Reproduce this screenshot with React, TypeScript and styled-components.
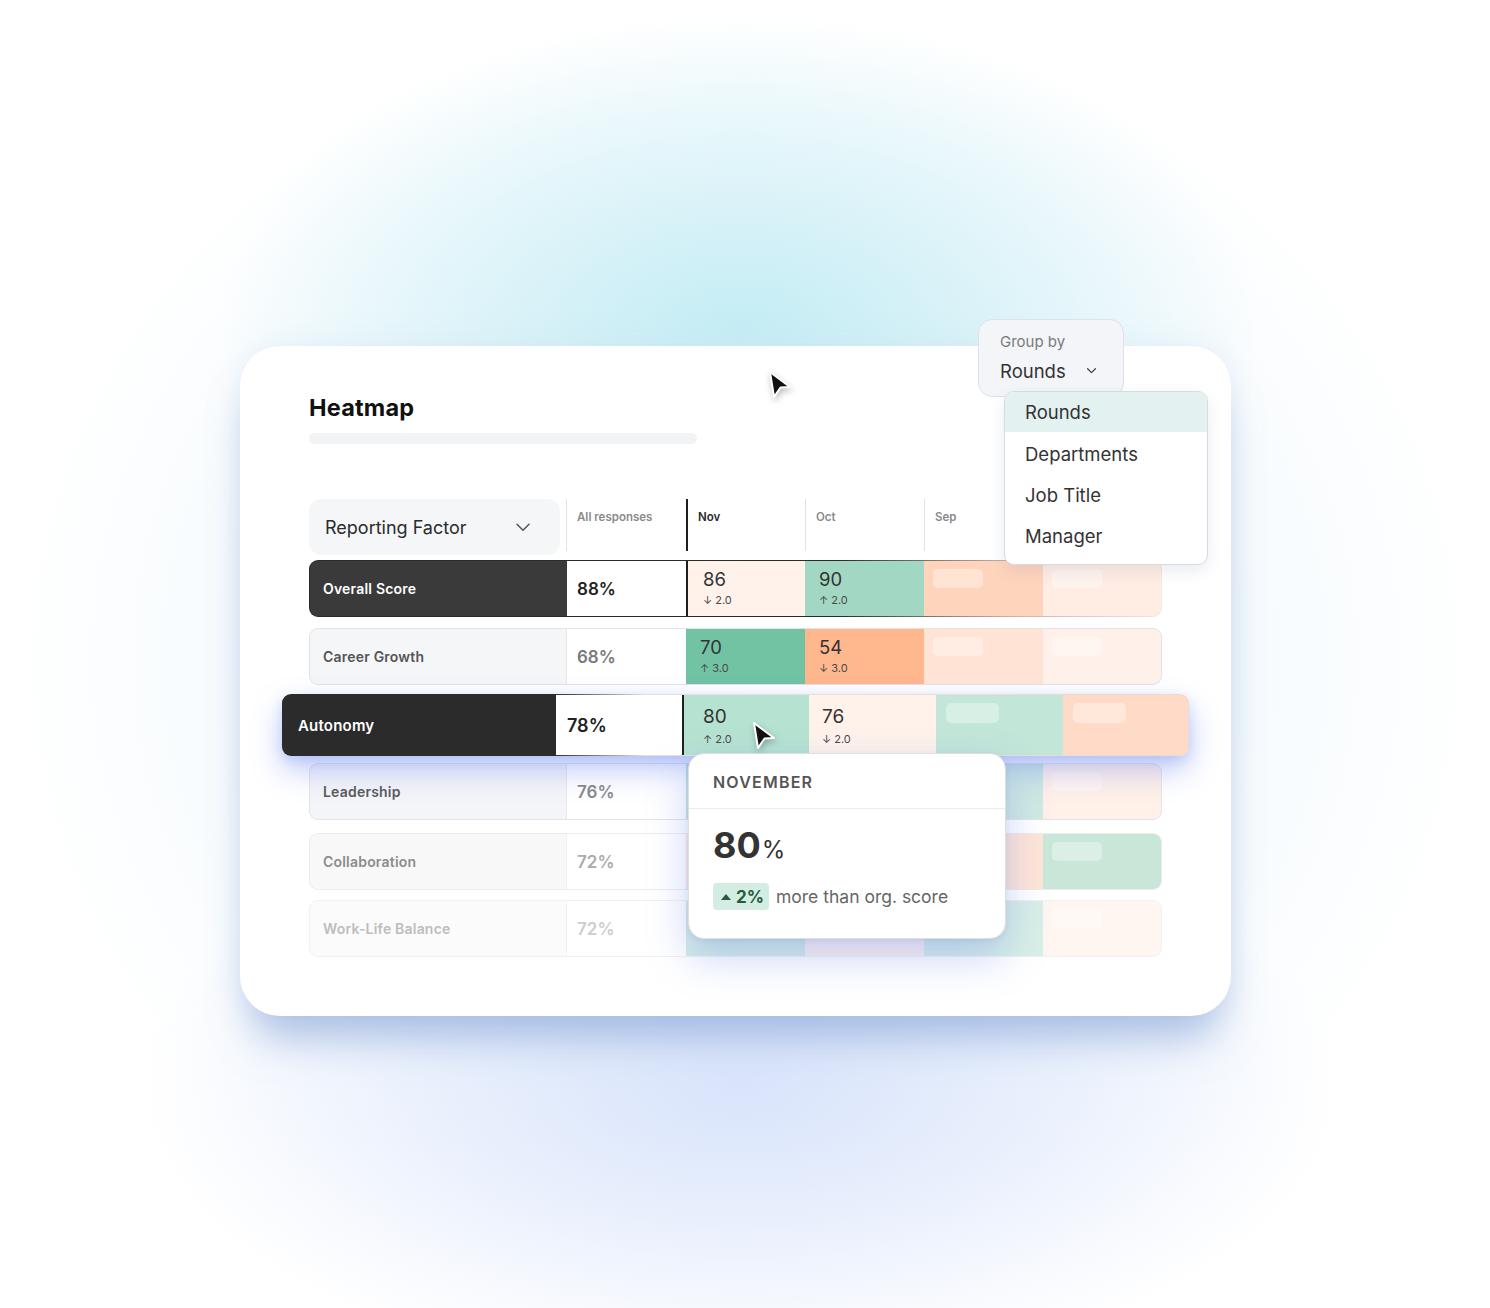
import React from "react";
import styled, { createGlobalStyle, css } from "styled-components";

const Global = createGlobalStyle`
  html, body { margin: 0; padding: 0; background: #fff; }
  body { font-family: Inter, "Noto Sans", Arial, sans-serif; -webkit-font-smoothing: antialiased; }
  * { box-sizing: border-box; }
`;

const Page = styled.div`
  position: relative;
  width: 1490px;
  height: 1308px;
  overflow: hidden;
  padding: 346px 0 0 240px;
  background:
    radial-gradient(ellipse 520px 310px at 740px 330px, rgba(194, 236, 244, 0.95), rgba(194, 236, 244, 0) 100%),
    radial-gradient(ellipse 600px 290px at 740px 1090px, rgba(216, 227, 251, 0.95), rgba(216, 227, 251, 0) 100%),
    radial-gradient(ellipse 740px 660px at 745px 660px, rgba(226, 241, 250, 0.9), rgba(255, 255, 255, 0) 100%),
    #ffffff;
`;

const Card = styled.div`
  position: relative;
  width: 991px;
  height: 670px;
  padding: 47px 69px 0 69px;
  background: #fff;
  border-radius: 40px;
  box-shadow: 0 34px 40px -12px rgba(120, 152, 210, 0.55), 0 0 30px rgba(200, 220, 240, 0.35);
`;

const Title = styled.h1`
  margin: 0;
  font-size: 23.5px;
  line-height: 30px;
  font-weight: 700;
  color: #111;
  letter-spacing: 0.2px;
`;

const Skeleton = styled.div`
  width: 388px;
  height: 11px;
  margin-top: 10px;
  border-radius: 6px;
  background: #f2f3f5;
`;

const Table = styled.div`
  position: relative;
  margin-top: 55px;
  width: 853px;
  display: flex;
  flex-direction: column;
`;

const HeaderRow = styled.div`
  display: grid;
  grid-template-columns: 257px 120px 119px 119px 119px 119px;
  height: 56px;
  margin-bottom: 5px;
`;

const FactorSelect = styled.div`
  width: 251px;
  height: 56px;
  border-radius: 12px;
  background: #f5f6f8;
  display: flex;
  align-items: center;
  justify-content: space-between;
  padding: 0 30px 0 16px;
  font-size: 18px;
  color: #2b2b2b;
`;

const HeadCell = styled.div<{ $active?: boolean }>`
  height: 52px;
  padding: 11px 0 0 10px;
  font-size: 11.5px;
  font-weight: 600;
  color: ${(p) => (p.$active ? "#2a2a2a" : "#8a8a8a")};
  border-left: ${(p) => (p.$active ? "2px solid #1f1f1f" : "1px solid #e2e2e2")};
`;

const RowFrame = styled.div<{ $frame: string; $wide?: boolean; $shadow?: boolean; $top: number }>`
  padding: 1px;
  border-radius: 9px;
  margin-top: ${(p) => p.$top}px;
  background: ${(p) => p.$frame};
  ${(p) =>
    p.$wide &&
    css`
      margin-left: -27px;
      margin-right: -27px;
      position: relative;
      z-index: 2;
    `}
  ${(p) =>
    p.$shadow &&
    css`
      box-shadow: 0 14px 30px rgba(96, 126, 240, 0.4), 0 4px 12px rgba(96, 126, 240, 0.2);
    `}
`;

const RowGrid = styled.div<{ $wide?: boolean }>`
  display: grid;
  grid-template-columns: ${(p) =>
    p.$wide ? "272px 127px 127px 127px 127px 125px" : "256px 120px 119px 119px 119px 118px"};
  height: ${(p) => (p.$wide ? "60px" : "55px")};
  border-radius: 8px;
  overflow: hidden;
`;

const LabelCell = styled.div<{ $bg: string; $color: string; $wide?: boolean }>`
  display: flex;
  align-items: center;
  padding-left: ${(p) => (p.$wide ? "15px" : "13px")};
  background: ${(p) => p.$bg};
  color: ${(p) => p.$color};
  font-size: ${(p) => (p.$wide ? "15px" : "14px")};
  font-weight: 600;
  letter-spacing: 0.2px;
`;

const ValueCell = styled.div<{ $color: string; $wide?: boolean; $line: string }>`
  display: flex;
  align-items: center;
  padding-left: ${(p) => (p.$wide ? "11px" : "10px")};
  background: #fff;
  border-left: 1px solid ${(p) => p.$line};
  color: ${(p) => p.$color};
  font-size: ${(p) => (p.$wide ? "18px" : "17px")};
  font-weight: 600;
`;

const HeatCell = styled.div<{ $bg: string; $marked?: boolean; $wide?: boolean }>`
  position: relative;
  background: ${(p) => p.$bg};
  padding-top: ${(p) => (p.$wide ? "11px" : "7px")};
  padding-left: ${(p) => (p.$marked ? (p.$wide ? "19px" : "15px") : p.$wide ? "13px" : "14px")};
  border-left: ${(p) => (p.$marked ? "2px solid #1e1e1e" : "none")};
`;

const Score = styled.div<{ $wide?: boolean }>`
  font-size: ${(p) => (p.$wide ? "19px" : "18.5px")};
  line-height: 22px;
  color: #333;
`;

const Delta = styled.div<{ $wide?: boolean }>`
  margin-top: ${(p) => (p.$wide ? "4px" : "3px")};
  font-size: 11px;
  line-height: 14px;
  color: #4a4a4a;
`;

const Placeholder = styled.div<{ $wide?: boolean }>`
  position: absolute;
  left: ${(p) => (p.$wide ? "10px" : "9px")};
  top: 8px;
  width: ${(p) => (p.$wide ? "53px" : "50px")};
  height: ${(p) => (p.$wide ? "20px" : "19px")};
  border-radius: 5px;
  background: rgba(255, 255, 255, 0.35);
`;

const Tooltip = styled.div`
  position: absolute;
  left: 379px;
  top: 254px;
  width: 318px;
  height: 186px;
  z-index: 3;
  background: #fff;
  border: 1px solid #dedfe3;
  border-radius: 16px;
  box-shadow: 0 18px 40px rgba(100, 130, 235, 0.35), 0 2px 6px rgba(0, 0, 0, 0.06);
`;

const TipHead = styled.div`
  height: 55px;
  padding: 18px 0 0 24px;
  border-bottom: 1px solid #ebebeb;
  font-size: 16px;
  font-weight: 600;
  letter-spacing: 1.2px;
  color: #555;
`;

const TipBody = styled.div`
  padding: 14px 0 0 24px;
`;

const BigValue = styled.div`
  display: flex;
  align-items: baseline;
  color: #333;
  font-size: 36px;
  font-weight: 700;
  line-height: 44px;
  span {
    font-size: 24px;
    font-weight: 400;
    margin-left: 1px;
  }
`;

const Compare = styled.div`
  margin-top: 11px;
  display: flex;
  align-items: center;
  gap: 7px;
  font-size: 17.5px;
  color: #666;
`;

const Badge = styled.div`
  display: flex;
  align-items: center;
  gap: 5px;
  height: 27px;
  padding: 0 5px 0 8px;
  border-radius: 4px;
  background: #d3ede3;
  color: #28593f;
  font-weight: 700;
  font-size: 17px;
`;

const Tri = styled.span`
  width: 0;
  height: 0;
  border-left: 5px solid transparent;
  border-right: 5px solid transparent;
  border-bottom: 6px solid #28593f;
`;

const GroupBy = styled.div`
  position: absolute;
  left: 738px;
  top: -27px;
  width: 146px;
  height: 78px;
  padding: 12px 0 0 21px;
  background: #f3f5f9;
  border: 1px solid #dde2ea;
  border-radius: 14px;
`;

const GroupLabel = styled.div`
  font-size: 15px;
  line-height: 20px;
  color: #7a7a7a;
`;

const GroupValue = styled.div`
  margin-top: 7px;
  display: flex;
  align-items: center;
  gap: 21px;
  font-size: 18.5px;
  line-height: 24px;
  color: #333;
`;

const Menu = styled.div`
  position: absolute;
  left: 764px;
  top: 45px;
  width: 204px;
  height: 174px;
  z-index: 4;
  overflow: hidden;
  background: #fff;
  border: 1px solid #d5dbe3;
  border-radius: 10px;
  box-shadow: 0 6px 16px rgba(80, 100, 140, 0.12);
`;

const MenuItem = styled.div<{ $selected?: boolean }>`
  height: ${(p) => (p.$selected ? "40px" : "41px")};
  margin-bottom: ${(p) => (p.$selected ? "1px" : "0")};
  display: flex;
  align-items: center;
  padding-left: 20px;
  font-size: 18.5px;
  color: #333;
  background: ${(p) => (p.$selected ? "#e4f1f1" : "transparent")};
`;

const CursorWrap = styled.div<{ $x: number; $y: number }>`
  position: absolute;
  left: ${(p) => p.$x}px;
  top: ${(p) => p.$y}px;
  z-index: 6;
  width: 26px;
  height: 30px;
  filter: drop-shadow(1px 3px 3px rgba(0, 0, 0, 0.25));
`;

const Cursor = ({ x, y }: { x: number; y: number }) => (
  <CursorWrap $x={x} $y={y}>
    <svg width="26" height="30" viewBox="0 0 26 30">
      <path
        d="M2 2 L22 17 L12.5 17.5 L6 27 Z"
        fill="#111"
        stroke="#fff"
        strokeWidth="2"
        strokeLinejoin="round"
      />
    </svg>
  </CursorWrap>
);

const Chevron = ({ size = 14, color = "#555" }: { size?: number; color?: string }) => (
  <svg width={size} height={size * 0.6} viewBox="0 0 14 8" fill="none">
    <path d="M1 1 L7 7 L13 1" stroke={color} strokeWidth={size < 12 ? 2 : 1.5} strokeLinecap="round" strokeLinejoin="round" />
  </svg>
);

type Heat = { bg: string; score?: string; delta?: string; ph?: boolean; marked?: boolean };
type RowData = {
  label: string;
  value: string;
  labelBg: string;
  labelColor: string;
  valueColor: string;
  line: string;
  frame: string;
  top: number;
  wide?: boolean;
  shadow?: boolean;
  heat: Heat[];
};

const rows: RowData[] = [
  {
    label: "Overall Score",
    value: "88%",
    labelBg: "#3a3a3a",
    labelColor: "#fff",
    valueColor: "#222",
    line: "#3a3a3a",
    frame: "linear-gradient(90deg, #2b2b2b 0%, #2b2b2b 62%, #c8b2a6 82%, #f7e6dc 100%)",
    top: 0,
    heat: [
      { bg: "#fff2eb", score: "86", delta: "↓ 2.0", marked: true },
      { bg: "#a2d8c3", score: "90", delta: "↑ 2.0" },
      { bg: "#ffd4bc", ph: true },
      { bg: "#ffede3", ph: true },
    ],
  },
  {
    label: "Career Growth",
    value: "68%",
    labelBg: "#f5f6f8",
    labelColor: "#555",
    valueColor: "#7a7a7a",
    line: "#e6e6e6",
    frame: "#e3e3e5",
    top: 11,
    heat: [
      { bg: "#72c3a4", score: "70", delta: "↑ 3.0", marked: false },
      { bg: "#ffb78e", score: "54", delta: "↓ 3.0" },
      { bg: "#ffe4d6", ph: true },
      { bg: "#fff1ea", ph: true },
    ],
  },
  {
    label: "Autonomy",
    value: "78%",
    labelBg: "#2b2b2b",
    labelColor: "#fff",
    valueColor: "#222",
    line: "#2b2b2b",
    frame: "linear-gradient(90deg, #2b2b2b 0%, #2b2b2b 30%, #e2e2e2 40%, #f0d8cc 100%)",
    top: 9,
    wide: true,
    shadow: true,
    heat: [
      { bg: "#b6e2d1", score: "80", delta: "↑ 2.0", marked: true },
      { bg: "#fff2eb", score: "76", delta: "↓ 2.0" },
      { bg: "#c2e6d8", ph: true },
      { bg: "#ffdac6", ph: true },
    ],
  },
  {
    label: "Leadership",
    value: "76%",
    labelBg: "#f4f5f8",
    labelColor: "#5a5a5a",
    valueColor: "#8a8a8a",
    line: "#e8e8e8",
    frame: "#e4e4e6",
    top: 7,
    heat: [
      { bg: "#c9e8dc" },
      { bg: "#ffeee5" },
      { bg: "#cfe9e2" },
      { bg: "#fff0e8", ph: true },
    ],
  },
  {
    label: "Collaboration",
    value: "72%",
    labelBg: "#f8f8f9",
    labelColor: "#8c8c8c",
    valueColor: "#ababab",
    line: "#eeeeee",
    frame: "#ececee",
    top: 13,
    heat: [
      { bg: "#ffeadf" },
      { bg: "#d5ece2" },
      { bg: "#ffe5d7" },
      { bg: "#c9e7d9", ph: true },
    ],
  },
  {
    label: "Work-Life Balance",
    value: "72%",
    labelBg: "#fbfbfb",
    labelColor: "#bdbdbd",
    valueColor: "#cdcdcd",
    line: "#f2f2f2",
    frame: "#f1f1f2",
    top: 10,
    heat: [
      { bg: "#d6eee5" },
      { bg: "#fff3ee" },
      { bg: "#d8efe6" },
      { bg: "#fff6f2", ph: true },
    ],
  },
];

const HeatRow = ({ r }: { r: RowData }) => (
  <RowFrame $frame={r.frame} $wide={r.wide} $shadow={r.shadow} $top={r.top}>
    <RowGrid $wide={r.wide}>
      <LabelCell $bg={r.labelBg} $color={r.labelColor} $wide={r.wide}>
        {r.label}
      </LabelCell>
      <ValueCell $color={r.valueColor} $wide={r.wide} $line={r.line}>
        {r.value}
      </ValueCell>
      {r.heat.map((h, i) => (
        <HeatCell key={i} $bg={h.bg} $marked={h.marked} $wide={r.wide}>
          {h.score && <Score $wide={r.wide}>{h.score}</Score>}
          {h.delta && <Delta $wide={r.wide}>{h.delta}</Delta>}
          {h.ph && <Placeholder $wide={r.wide} />}
        </HeatCell>
      ))}
    </RowGrid>
  </RowFrame>
);

export default function App() {
  return (
    <>
      <Global />
      <Page>
        <Card>
          <Title>Heatmap</Title>
          <Skeleton />
          <Table>
            <HeaderRow>
              <FactorSelect>
                Reporting Factor
                <Chevron size={14} color="#555" />
              </FactorSelect>
              <HeadCell>All responses</HeadCell>
              <HeadCell $active>Nov</HeadCell>
              <HeadCell>Oct</HeadCell>
              <HeadCell>Sep</HeadCell>
              <HeadCell>Aug</HeadCell>
            </HeaderRow>
            {rows.map((r) => (
              <HeatRow key={r.label} r={r} />
            ))}
            <Tooltip>
              <TipHead>NOVEMBER</TipHead>
              <TipBody>
                <BigValue>
                  80<span>%</span>
                </BigValue>
                <Compare>
                  <Badge>
                    <Tri />
                    2%
                  </Badge>
                  more than org. score
                </Compare>
              </TipBody>
            </Tooltip>
          </Table>
          <GroupBy>
            <GroupLabel>Group by</GroupLabel>
            <GroupValue>
              Rounds
              <Chevron size={9} color="#444" />
            </GroupValue>
          </GroupBy>
          <Menu>
            <MenuItem $selected>Rounds</MenuItem>
            <MenuItem>Departments</MenuItem>
            <MenuItem>Job Title</MenuItem>
            <MenuItem>Manager</MenuItem>
          </Menu>
          <Cursor x={528} y={24} />
          <Cursor x={512} y={375} />
        </Card>
      </Page>
    </>
  );
}
